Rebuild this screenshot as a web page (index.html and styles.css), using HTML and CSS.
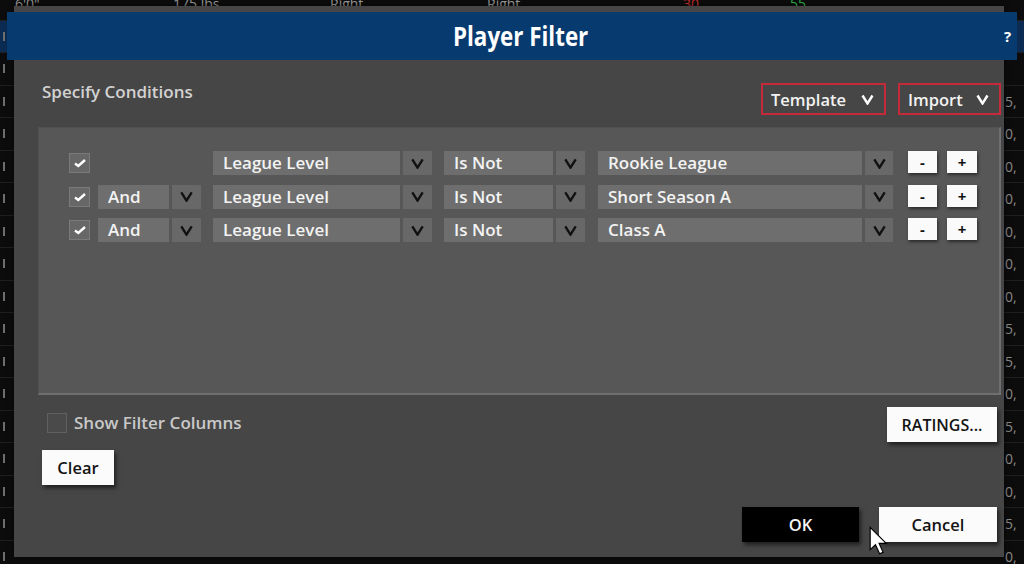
FILE: index.html
```html
<!DOCTYPE html>
<html lang="en">
<head>
  <meta charset="UTF-8">
  <meta name="viewport" content="width=device-width, initial-scale=1.0">
  <title>Player Filter</title>
  <link rel="stylesheet" href="styles.css">
</head>
<body>
  <!-- roster table behind the modal -->
  <div class="backdrop">
    <div class="bg-row">
      <span class="cell w1">6'0"</span><span class="cell w2">175 lbs</span><span class="cell w3">Right</span><span class="cell w4">Right</span><span class="cell w5 red">30</span><span class="cell green">55</span>
    </div>
    <div class="bg-row sel"><span class="tick"></span><span class="num"></span></div>
    <div class="bg-row"><span class="tick"></span><span class="num"></span></div>
    <div class="bg-row"><span class="tick"></span><span class="num">5,</span></div>
    <div class="bg-row"><span class="tick"></span><span class="num">0,</span></div>
    <div class="bg-row"><span class="tick"></span><span class="num">0,</span></div>
    <div class="bg-row"><span class="tick"></span><span class="num">0,</span></div>
    <div class="bg-row"><span class="tick"></span><span class="num">0,</span></div>
    <div class="bg-row"><span class="tick"></span><span class="num">0,</span></div>
    <div class="bg-row"><span class="tick"></span><span class="num">0,</span></div>
    <div class="bg-row"><span class="tick"></span><span class="num">5,</span></div>
    <div class="bg-row"><span class="tick"></span><span class="num">5,</span></div>
    <div class="bg-row"><span class="tick"></span><span class="num">0,</span></div>
    <div class="bg-row"><span class="tick"></span><span class="num">5,</span></div>
    <div class="bg-row"><span class="tick"></span><span class="num">0,</span></div>
    <div class="bg-row"><span class="tick"></span><span class="num">0,</span></div>
    <div class="bg-row"><span class="tick"></span><span class="num">5,</span></div>
    <div class="bg-row"><span class="tick"></span><span class="num">0,</span></div>
  </div>

  <div class="dialog">
    <header class="dialog-head">
      <h1><span>Player Filter</span></h1>
      <span class="help">?</span>
    </header>

    <div class="conditions-bar">
      <h2>Specify Conditions</h2>
      <div class="menus">
        <button class="menu tpl">Template <svg width="13" height="11" viewBox="0 0 13 11"><path d="M1.5 1.5 L6.5 9.5 L11.5 1.5" fill="none" stroke="#fff" stroke-width="2.4"/></svg></button>
        <button class="menu imp">Import <svg width="13" height="11" viewBox="0 0 13 11"><path d="M1.5 1.5 L6.5 9.5 L11.5 1.5" fill="none" stroke="#fff" stroke-width="2.4"/></svg></button>
      </div>
    </div>

    <div class="panel">
      <div class="cond-row">
        <span class="check"><svg width="12" height="10" viewBox="0 0 12 10"><path d="M1 5.5 L4.3 8 L11 2" fill="none" stroke="#fff" stroke-width="2.4"/></svg></span>
        <span class="join-empty"></span>
        <span class="field attr">League Level</span>
        <span class="drop"><svg width="13" height="11" viewBox="0 0 13 11"><path d="M1.3 1.3 L6.5 9.6 L11.7 1.3" fill="none" stroke="#111" stroke-width="2.4"/></svg></span>
        <span class="field op">Is Not</span>
        <span class="drop"><svg width="13" height="11" viewBox="0 0 13 11"><path d="M1.3 1.3 L6.5 9.6 L11.7 1.3" fill="none" stroke="#111" stroke-width="2.4"/></svg></span>
        <span class="field val">Rookie League</span>
        <span class="drop narrow"><svg width="13" height="11" viewBox="0 0 13 11"><path d="M1.3 1.3 L6.5 9.6 L11.7 1.3" fill="none" stroke="#111" stroke-width="2.4"/></svg></span>
        <button class="step minus">-</button>
        <button class="step plus">+</button>
      </div>
      <div class="cond-row">
        <span class="check"><svg width="12" height="10" viewBox="0 0 12 10"><path d="M1 5.5 L4.3 8 L11 2" fill="none" stroke="#fff" stroke-width="2.4"/></svg></span>
        <span class="field join">And</span>
        <span class="drop"><svg width="13" height="11" viewBox="0 0 13 11"><path d="M1.3 1.3 L6.5 9.6 L11.7 1.3" fill="none" stroke="#111" stroke-width="2.4"/></svg></span>
        <span class="field attr">League Level</span>
        <span class="drop"><svg width="13" height="11" viewBox="0 0 13 11"><path d="M1.3 1.3 L6.5 9.6 L11.7 1.3" fill="none" stroke="#111" stroke-width="2.4"/></svg></span>
        <span class="field op">Is Not</span>
        <span class="drop"><svg width="13" height="11" viewBox="0 0 13 11"><path d="M1.3 1.3 L6.5 9.6 L11.7 1.3" fill="none" stroke="#111" stroke-width="2.4"/></svg></span>
        <span class="field val">Short Season A</span>
        <span class="drop narrow"><svg width="13" height="11" viewBox="0 0 13 11"><path d="M1.3 1.3 L6.5 9.6 L11.7 1.3" fill="none" stroke="#111" stroke-width="2.4"/></svg></span>
        <button class="step minus">-</button>
        <button class="step plus">+</button>
      </div>
      <div class="cond-row">
        <span class="check"><svg width="12" height="10" viewBox="0 0 12 10"><path d="M1 5.5 L4.3 8 L11 2" fill="none" stroke="#fff" stroke-width="2.4"/></svg></span>
        <span class="field join">And</span>
        <span class="drop"><svg width="13" height="11" viewBox="0 0 13 11"><path d="M1.3 1.3 L6.5 9.6 L11.7 1.3" fill="none" stroke="#111" stroke-width="2.4"/></svg></span>
        <span class="field attr">League Level</span>
        <span class="drop"><svg width="13" height="11" viewBox="0 0 13 11"><path d="M1.3 1.3 L6.5 9.6 L11.7 1.3" fill="none" stroke="#111" stroke-width="2.4"/></svg></span>
        <span class="field op">Is Not</span>
        <span class="drop"><svg width="13" height="11" viewBox="0 0 13 11"><path d="M1.3 1.3 L6.5 9.6 L11.7 1.3" fill="none" stroke="#111" stroke-width="2.4"/></svg></span>
        <span class="field val">Class A</span>
        <span class="drop narrow"><svg width="13" height="11" viewBox="0 0 13 11"><path d="M1.3 1.3 L6.5 9.6 L11.7 1.3" fill="none" stroke="#111" stroke-width="2.4"/></svg></span>
        <button class="step minus">-</button>
        <button class="step plus">+</button>
      </div>
    </div>

    <div class="extras">
      <div class="extras-left">
        <label class="show-cols"><span class="box"></span>Show Filter Columns</label>
        <button class="btn clear">Clear</button>
      </div>
      <button class="btn ratings">RATINGS...</button>
    </div>

    <div class="actions">
      <button class="btn dark ok">OK</button>
      <button class="btn cancel">Cancel</button>
    </div>
  </div>

  <!-- mouse pointer -->
  <svg class="cursor" width="20" height="31" viewBox="0 0 17 26">
    <path d="M1 1 L1 20 L5.5 15.8 L9 23.5 L12 22.2 L8.6 14.6 L14.6 14.6 Z" fill="#fff" stroke="#000" stroke-width="1"/>
  </svg>
</body>
</html>
```

FILE: styles.css
```css
html,body{
  margin: 0;
}
body{
  width: 1024px;
  height: 564px;
  overflow: hidden;
  position: relative;
  background: #0c0c0c;
  font-family: "Open Sans", "Noto Sans", sans-serif;
}
button{
  font-family: inherit;
  cursor: pointer;
}

/* table behind */
.backdrop{
  margin-top: -12px;
}
.bg-row{
  height: 32.5px;
  display: flex;
  align-items: center;
  box-sizing: border-box;
  border-bottom: 1px solid #1f1f1f;
  font-size: 14px;
  color: #9a9a9a;
}
.bg-row.sel{ background: #0b2b52; }
.bg-row .cell{ display: inline-block; }
.bg-row .cell:first-child{ margin-left: 15px; }
.w1{ width: 158px; }
.w2{ width: 157px; }
.w3{ width: 157px; }
.w4{ width: 196px; }
.w5{ width: 107px; }
.red{ color: #c8302c; }
.green{ color: #2fb34a; }
.tick{
  width: 2px;
  height: 9px;
  margin-left: 3px;
  background: #6e6e6e;
}
.num{
  margin-left: auto;
  width: 19px;
  color: #8a8a8a;
}

/* modal */
.dialog{
  position: absolute;
  left: 14px;
  top: 6px;
  width: 990px;
  height: 551px;
  background: #464646;
  box-shadow: 0 0 6px rgba(0,0,0,.6);
}
.dialog-head{
  display: flex;
  align-items: center;
  height: 48px;
  margin: 6px -13px 0 -7px;
  background: #073a6f;
  color: #fff;
}
.dialog-head h1{
  flex: 1;
  margin: 0;
  padding-left: 30px;
  text-align: center;
  font-size: 26px;
  font-weight: 700;
}
.dialog-head h1 span{
  display: inline-block;
  transform: scaleX(.86);
}
.help{
  width: 8px;
  margin-right: 5px;
  font-size: 15px;
  font-weight: 700;
}

.conditions-bar{
  display: flex;
  justify-content: space-between;
  align-items: flex-start;
  margin-top: 23px;
  padding: 0 3px 0 28px;
}
.conditions-bar h2{
  margin: 0;
  font-size: 17px;
  line-height: 18px;
  font-weight: 600;
  color: #d2d2d2;
}
.menus{
  display: flex;
  gap: 12px;
}
.menu{
  display: flex;
  align-items: center;
  justify-content: space-between;
  height: 32px;
  box-sizing: border-box;
  padding: 0 10px 0 8px;
  background: transparent;
  border: 2px solid #c52a3b;
  color: #f2f2f2;
  font-size: 16.5px;
  font-weight: 600;
}
.menu.tpl{ width: 125px; }
.menu.imp{ width: 103px; }

.panel{
  height: 268px;
  box-sizing: border-box;
  margin: 12px 3px 0 24px;
  padding: 23px 0 0 30px;
  background: #565756;
  border: 1px solid #515151;
  border-right: 2px solid #6e6f6e;
  border-bottom: 2px solid #6e6f6e;
}
.cond-row{
  display: flex;
  align-items: center;
  height: 24px;
  margin-bottom: 9.5px;
}
.check{
  display: flex;
  align-items: center;
  justify-content: center;
  width: 21px;
  height: 20px;
  box-sizing: border-box;
  margin-right: 8px;
  background: #676767;
  border: 1px solid #7a7a7a;
}
.join-empty{ width: 103px; }
.field{
  height: 24px;
  box-sizing: border-box;
  padding-left: 10px;
  background: #6e6e6e;
  color: #f3f3f3;
  font-size: 17px;
  font-weight: 600;
  line-height: 24px;
  white-space: nowrap;
}
.field.join{ width: 71px; }
.field.attr{ width: 187px; margin-left: 12px; }
.field.op{ width: 109px; margin-left: 12px; }
.field.val{ width: 264px; margin-left: 13px; }
.drop{
  display: flex;
  align-items: center;
  justify-content: center;
  width: 29px;
  height: 24px;
  margin-left: 3px;
  background: #686868;
}
.drop.narrow{ width: 28px; }
.step{
  height: 22px;
  margin-top: -2px;
  padding: 0;
  border: none;
  background: #fafafa;
  color: #111;
  font-size: 15px;
  font-weight: 700;
  line-height: 20px;
  box-shadow: 1px 2px 3px rgba(0,0,0,.5);
}
.minus{ width: 29px; margin-left: 15px; }
.plus{ width: 30px; margin-left: 10px; }

.extras{
  display: flex;
  justify-content: space-between;
  align-items: flex-start;
  padding: 0 7px 0 28px;
}
.extras-left{
  display: flex;
  flex-direction: column;
  align-items: flex-start;
}
.show-cols{
  display: flex;
  align-items: center;
  gap: 7px;
  margin: 16px 0 0 5px;
  color: #c9c9c9;
  font-size: 17px;
  font-weight: 600;
}
.show-cols .box{
  width: 20px;
  height: 20px;
  box-sizing: border-box;
  border: 1px solid #606060;
  background: #4a4a4a;
}
.btn{
  height: 35px;
  padding: 0;
  border: none;
  background: #fbfbfb;
  color: #141414;
  font-size: 16.5px;
  font-weight: 600;
  box-shadow: 2px 3px 4px rgba(0,0,0,.55);
}
.clear{ width: 72px; margin-top: 16px; }
.ratings{ width: 110px; margin-top: 12px; font-size: 16px; }
.actions{
  display: flex;
  justify-content: flex-end;
  gap: 20px;
  margin-top: 22px;
  padding-right: 7px;
}
.btn.dark{
  background: #000;
  color: #f4f4f4;
}
.ok{ width: 117px; }
.cancel{ width: 118px; }

.cursor{
  position: absolute;
  left: 869px;
  top: 526px;
}
```
